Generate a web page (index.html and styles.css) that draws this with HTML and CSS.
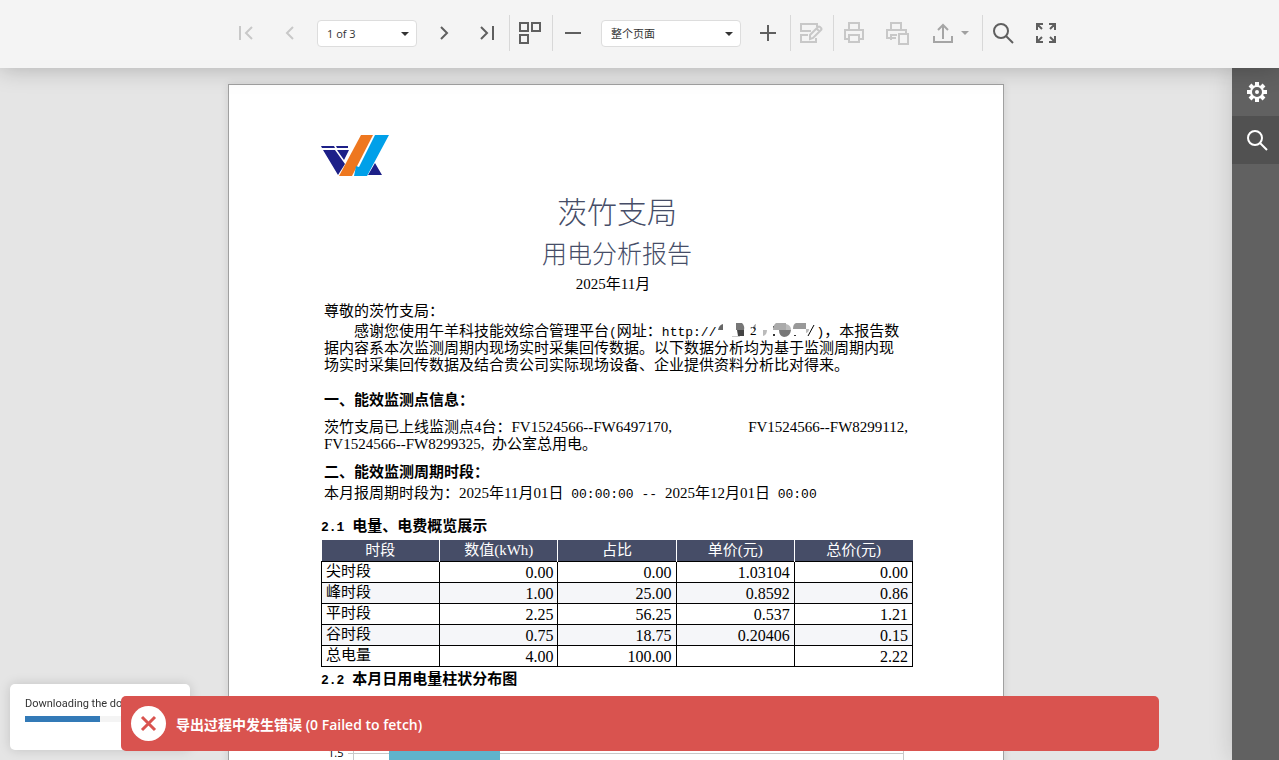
FILE: index.html
```html
<!DOCTYPE html>
<html lang="zh-CN">
<head>
  <meta charset="UTF-8">
  <title>用电分析报告</title>
  <link rel="stylesheet" href="styles.css">
</head>
<body>
<!-- 顶部工具栏 -->
<div class="toolbar">
  <button class="btn" disabled aria-label="首页"><svg width="24" height="24"><path d="M5 5v14M17 6l-6 6 6 6"/></svg></button>
  <button class="btn" disabled aria-label="上一页"><svg width="24" height="24"><path d="M15 6l-6 6 6 6"/></svg></button>
  <div class="combo combo-page">
    <select aria-label="页码"><option>1 of 3</option><option>2 of 3</option><option>3 of 3</option></select>
  </div>
  <button class="btn" aria-label="下一页"><svg width="24" height="24"><path d="M9 6l6 6-6 6"/></svg></button>
  <button class="btn" aria-label="末页"><svg width="24" height="24"><path d="M6 6l6 6-6 6M18 5v14"/></svg></button>
  <button class="btn line" aria-label="多页"><svg width="24" height="24"><path d="M2 2h8v8H2zM14 2h8v8h-8zM2 14h8v8H2z"/></svg></button>
  <button class="btn line" aria-label="缩小"><svg width="24" height="24"><path d="M4 12h16"/></svg></button>
  <div class="combo combo-zoom">
    <select aria-label="缩放"><option>整个页面</option><option>100%</option></select>
  </div>
  <button class="btn" aria-label="放大"><svg width="24" height="24"><path d="M4 12h16M12 4v16"/></svg></button>
  <button class="btn line" disabled aria-label="编辑"><svg width="24" height="24"><path d="M18 6V3H2v7h10M9 14H2v7h15v-4"/><path d="M11 18v-4l8-8q1-1 2 0l1 1q1 1 0 2l-8 8zM18 8l3 3"/></svg></button>
  <button class="btn line" disabled aria-label="打印"><svg width="24" height="24"><path d="M7 8V2h10v6M7 18H3V9h18v9h-4M7 14h10v7H7z"/></svg></button>
  <button class="btn" disabled aria-label="打印本页"><svg width="24" height="24"><path d="M6 8V2h10v6M12 14H6v5M6 17H2V9h19v3M6 17h5"/><path d="M15 13h8v10h-9V13z"/></svg></button>
  <button class="btn btn-export" aria-label="导出"><svg width="24" height="24"><path d="M3 15v6h18v-6M12 18V4M7 9l5-5 5 5"/></svg><i class="caret"></i></button>
  <button class="btn line" aria-label="搜索"><svg width="24" height="24"><circle cx="10" cy="10" r="7"/><path d="M15 15l7 7"/></svg></button>
  <button class="btn" aria-label="全屏"><svg width="24" height="24"><path d="M3 9V3h6M15 3h6v6M21 15v6h-6M9 21H3v-6M3 3l5 5M21 3l-5 5M21 21l-5-5M3 21l5-5"/></svg></button>
</div>

<div class="main">
  <!-- 报表预览区 -->
  <div class="viewer">
    <div class="paper">
      <svg class="logo" width="68" height="41" viewBox="0 0 68 41">
        <path fill="#1d2088" d="M0 11h13l1 2H1zM15 11h12v2H16zM2 15h12l10 14-7 11zM16 15h12l-5 10zM54 28l7 12H47z"/>
        <path fill="#ee771f" d="M40 0h12L31 41H18z"/>
        <path fill="#00a0e9" d="M54 0h14L46 41H33l2-10 3 1z"/>
      </svg>
      <h1>茨竹支局</h1>
      <h2>用电分析报告</h2>
      <p class="date">2025年11月</p>

      <p class="hello">尊敬的茨竹支局：</p>
      <p class="intro">感谢您使用午羊科技能效综合管理平台<span class="mono">(</span>网址：<span class="mono">http://</span><svg class="mask" width="100" height="17" viewBox="0 0 100 17">
        <path fill="#666" d="M7 1v6H2q1-5 5-6z"/><path fill="#777" d="M20 0h6q3 3 2 7h-8z"/><path fill="#444" d="M21 7h7v6h-6z"/><path fill="#ccc" d="M16 13h8v1h-8z"/>
        <path fill="#999" d="M40 1q-3 1-3 5h2z"/><text x="34" y="12">2</text><path fill="#bbb" d="M47 7h4q0 5-4 6z"/><path fill="#333" d="M57 3h2v2h-2zM57 11h2v2h-2z"/>
        <path fill="#aaa" d="M60 0h10v7H57q0-5 3-7z"/><path fill="#bbb" d="M70 1q5 1 5 6h-5z"/><path fill="#777" d="M63 7h12q-1 7-7 7-5-1-5-7z"/>
        <path fill="#999" d="M80 0h10v6H77q0-5 3-6z"/><path fill="#bbb" d="M90 6v4q3-1 3-4z"/><path fill="#333" d="M78 12h2v1h-2z"/><path stroke="#000" d="M92 13l6-11"/>
      </svg><span class="mono">)</span>，本报告数<br>据内容系本次监测周期内现场实时采集回传数据。以下数据分析均为基于监测周期内现<br>场实时采集回传数据及结合贵公司实际现场设备、企业提供资料分析比对得来。</p>

      <h3>一、能效监测点信息：</h3>
      <div class="points">
        <p class="spread"><span>茨竹支局已上线监测点4台：FV1524566--FW6497170,</span><span>FV1524566--FW8299112,</span></p>
        <p>FV1524566--FW8299325,&nbsp; 办公室总用电。</p>
      </div>

      <h3>二、能效监测周期时段：</h3>
      <p class="period">本月报周期时段为：2025年11月01日<span class="mono"> 00:00:00 -- </span>2025年12月01日<span class="mono"> 00:00</span></p>

      <h4><span class="mono">2.1 </span>电量、电费概览展示</h4>
      <table>
        <thead>
          <tr><th>时段</th><th>数值(kWh)</th><th>占比</th><th>单价(元)</th><th>总价(元)</th></tr>
        </thead>
        <tbody>
          <tr><td>尖时段</td><td>0.00</td><td>0.00</td><td>1.03104</td><td>0.00</td></tr>
          <tr><td>峰时段</td><td>1.00</td><td>25.00</td><td>0.8592</td><td>0.86</td></tr>
          <tr><td>平时段</td><td>2.25</td><td>56.25</td><td>0.537</td><td>1.21</td></tr>
          <tr><td>谷时段</td><td>0.75</td><td>18.75</td><td>0.20406</td><td>0.15</td></tr>
          <tr><td>总电量</td><td>4.00</td><td>100.00</td><td></td><td>2.22</td></tr>
        </tbody>
      </table>

      <h4 class="chart-title"><span class="mono">2.2 </span>本月日用电量柱状分布图</h4>
      <svg class="chart" width="592" height="240">
        <path stroke="#c8c8c8" d="M27 64.5h556M32.5 20v220M582.5 20v220"/>
        <path fill="#5fb3cc" d="M68 40h111v200H68z"/>
        <text x="7" y="68">1.5</text>
      </svg>
    </div>
  </div>

  <!-- 右侧页签 -->
  <div class="side">
    <button class="tab" aria-label="设置"><svg width="24" height="24"><circle cx="12" cy="12" r="6"/><circle cx="12" cy="12" r="1"/><path stroke-width="4" d="M12 2v4M12 18v4M2 12h4M18 12h4M5 5l3 3M16 16l3 3M19 5l-3 3M5 19l3-3"/></svg></button>
    <button class="tab tab-search" aria-label="查找"><svg width="24" height="24"><circle cx="10" cy="10" r="7"/><path d="M15 15l7 7"/></svg></button>
  </div>
</div>

<!-- 导出进度 -->
<div class="progress">
  <div class="progress-text">Downloading the document...</div>
  <div class="track"><div class="bar" style="width: 50%"></div></div>
</div>

<!-- 错误提示 -->
<div class="toast" role="alert">
  <span class="toast-icon"><svg width="35" height="35"><path d="M11 11l13 13M24 11L11 24"/></svg></span>
  <span>导出过程中发生错误 (0 Failed to fetch)</span>
</div>
</body>
</html>
```
FILE: styles.css
```css
* {
  box-sizing: border-box;
  margin: 0;
  padding: 0;
}

body {
  display: flex;
  flex-direction: column;
  height: 100vh;
  overflow: hidden;
  background: #e5e5e5;
  font-family: "Open Sans", "Noto Sans CJK SC", sans-serif;
}

button {
  border: 0;
  background: none;
}

/* 工具栏 */
.toolbar {
  display: flex;
  flex: none;
  align-items: center;
  justify-content: center;
  height: 68px;
  padding: 0 0 2px 15px;
  background: #f4f4f4;
  box-shadow: 0 0 24px rgba(0, 0, 0, 0.25);
  position: relative;
  z-index: 1;
}

.btn {
  display: flex;
  align-items: center;
  justify-content: center;
  width: 43px;
  height: 36px;
  padding-right: 2px;
  border-left: 1px solid transparent;
}

.btn.line {
  border-left-color: #d8d8d8;
}

.btn svg,
.tab svg {
  fill: none;
  stroke: #5f5f5f;
  stroke-width: 2;
}

.btn:disabled svg {
  stroke: #c8c8c8;
}

.btn-export {
  width: 63px;
  gap: 6px;
}

.btn-export svg {
  stroke: #a5a5a5;
}

.caret {
  border: 4px solid transparent;
  border-top-color: #a0a0a0;
  border-bottom: 0;
}

.combo {
  position: relative;
}

.combo::after {
  content: "";
  position: absolute;
  right: 8px;
  top: 12px;
  border: 4px solid transparent;
  border-top-color: #333;
  border-bottom: 0;
}

.combo-page {
  width: 100px;
  margin: 0 6px 0 5px;
}

.combo-zoom {
  width: 140px;
  margin: 0 6px;
}

.combo select {
  display: block;
  width: 100%;
  height: 27px;
  padding: 0 9px;
  border: 1px solid #ddd;
  border-radius: 4px;
  background: #fff;
  color: #333;
  font: 11px "Open Sans", "Noto Sans CJK SC", sans-serif;
  appearance: none;
}

/* 主体 */
.main {
  display: flex;
  flex: 1;
  min-height: 0;
}

.viewer {
  flex: 1;
  padding-top: 16px;
  overflow: hidden;
}

.paper {
  width: 776px;
  margin: 0 auto;
  padding: 50px 90px 50px 92px;
  border: 1px solid #a0a0a0;
  background: #fff;
  box-shadow: 0 0 8px rgba(0, 0, 0, 0.1);
  color: #000;
  font: 15px/17px "Liberation Serif", "Noto Sans CJK SC", serif;
}

.paper p {
  padding-left: 3px;
  white-space: nowrap;
}

.logo {
  display: block;
  margin-bottom: 16px;
}

h1,
h2 {
  color: #464d67;
  font-weight: 300;
  line-height: 42px;
  text-align: center;
}

h1 {
  font-size: 30px;
}

h2 {
  font-size: 25px;
}

.paper .date {
  padding: 0 8px 0 0;
  text-align: center;
}

.hello {
  margin: 10px 0 3px;
}

.intro {
  text-indent: 30px;
}

.mono {
  font-family: "Liberation Mono", monospace;
  font-size: 13px;
  line-height: 1;
  white-space: pre;
}

.mask {
  vertical-align: -4px;
}

.mask text {
  font-size: 13px;
}

h3,
h4 {
  font-size: 15px;
  line-height: 20px;
}

h3 {
  padding-left: 3px;
}

.intro + h3 {
  margin: 16px 0 9px;
}

.points {
  margin-bottom: 9px;
}

.spread {
  display: flex;
  justify-content: space-between;
  padding-right: 5px;
}

.period {
  margin: 3px 0 14px;
}

table {
  width: 592px;
  margin: 4px 0 2px;
  border-collapse: collapse;
  table-layout: fixed;
}

th,
td {
  height: 21px;
  border: 1px solid #000;
  line-height: 18px;
}

th {
  border: 0;
  border-left: 1px solid #fff;
  background: #464d67;
  color: #fff;
  font-weight: normal;
}

th:first-child {
  border-left: 0;
}

td {
  padding: 2px 4px 0 0;
  font-size: 16px;
  text-align: right;
}

td:first-child {
  padding: 0 0 2px 4px;
  font-size: 15px;
  text-align: left;
}

tbody tr:nth-child(even) {
  background: #f5f6f9;
}

.chart {
  display: block;
}

.chart text {
  font: 11px "Open Sans", sans-serif;
}

/* 右侧栏 */
.side {
  width: 47px;
  background: #616161;
  box-shadow: 0 0 24px rgba(0, 0, 0, 0.15);
  position: relative;
}

.tab {
  display: flex;
  align-items: center;
  justify-content: center;
  width: 100%;
  height: 48px;
  padding-left: 3px;
}

.tab svg {
  stroke: #fff;
}

.tab-search {
  background: #515151;
}

/* 浮层 */
.progress {
  position: fixed;
  left: 10px;
  bottom: 10px;
  z-index: 3;
  width: 180px;
  height: 66px;
  padding: 12px 15px;
  border-radius: 5px;
  background: #fff;
  box-shadow: 0 0 12px rgba(0, 0, 0, 0.15);
  color: #333;
  font: 11px/15px Roboto, sans-serif;
  white-space: nowrap;
}

.track {
  height: 6px;
  margin-top: 5px;
  background: #f4f4f4;
}

.bar {
  height: 6px;
  background: #337ab7;
}

.toast {
  display: flex;
  align-items: center;
  gap: 10px;
  position: fixed;
  left: 121px;
  right: 120px;
  bottom: 9px;
  z-index: 4;
  height: 55px;
  padding: 0 10px;
  border-radius: 5px;
  background: #d9534f;
  color: #fff;
  font-size: 14px;
  font-weight: 600;
}

.toast-icon {
  width: 35px;
  height: 35px;
  border-radius: 50%;
  background: #fff;
}

.toast-icon svg {
  display: block;
  stroke: #d9534f;
  stroke-width: 3;
}
```
